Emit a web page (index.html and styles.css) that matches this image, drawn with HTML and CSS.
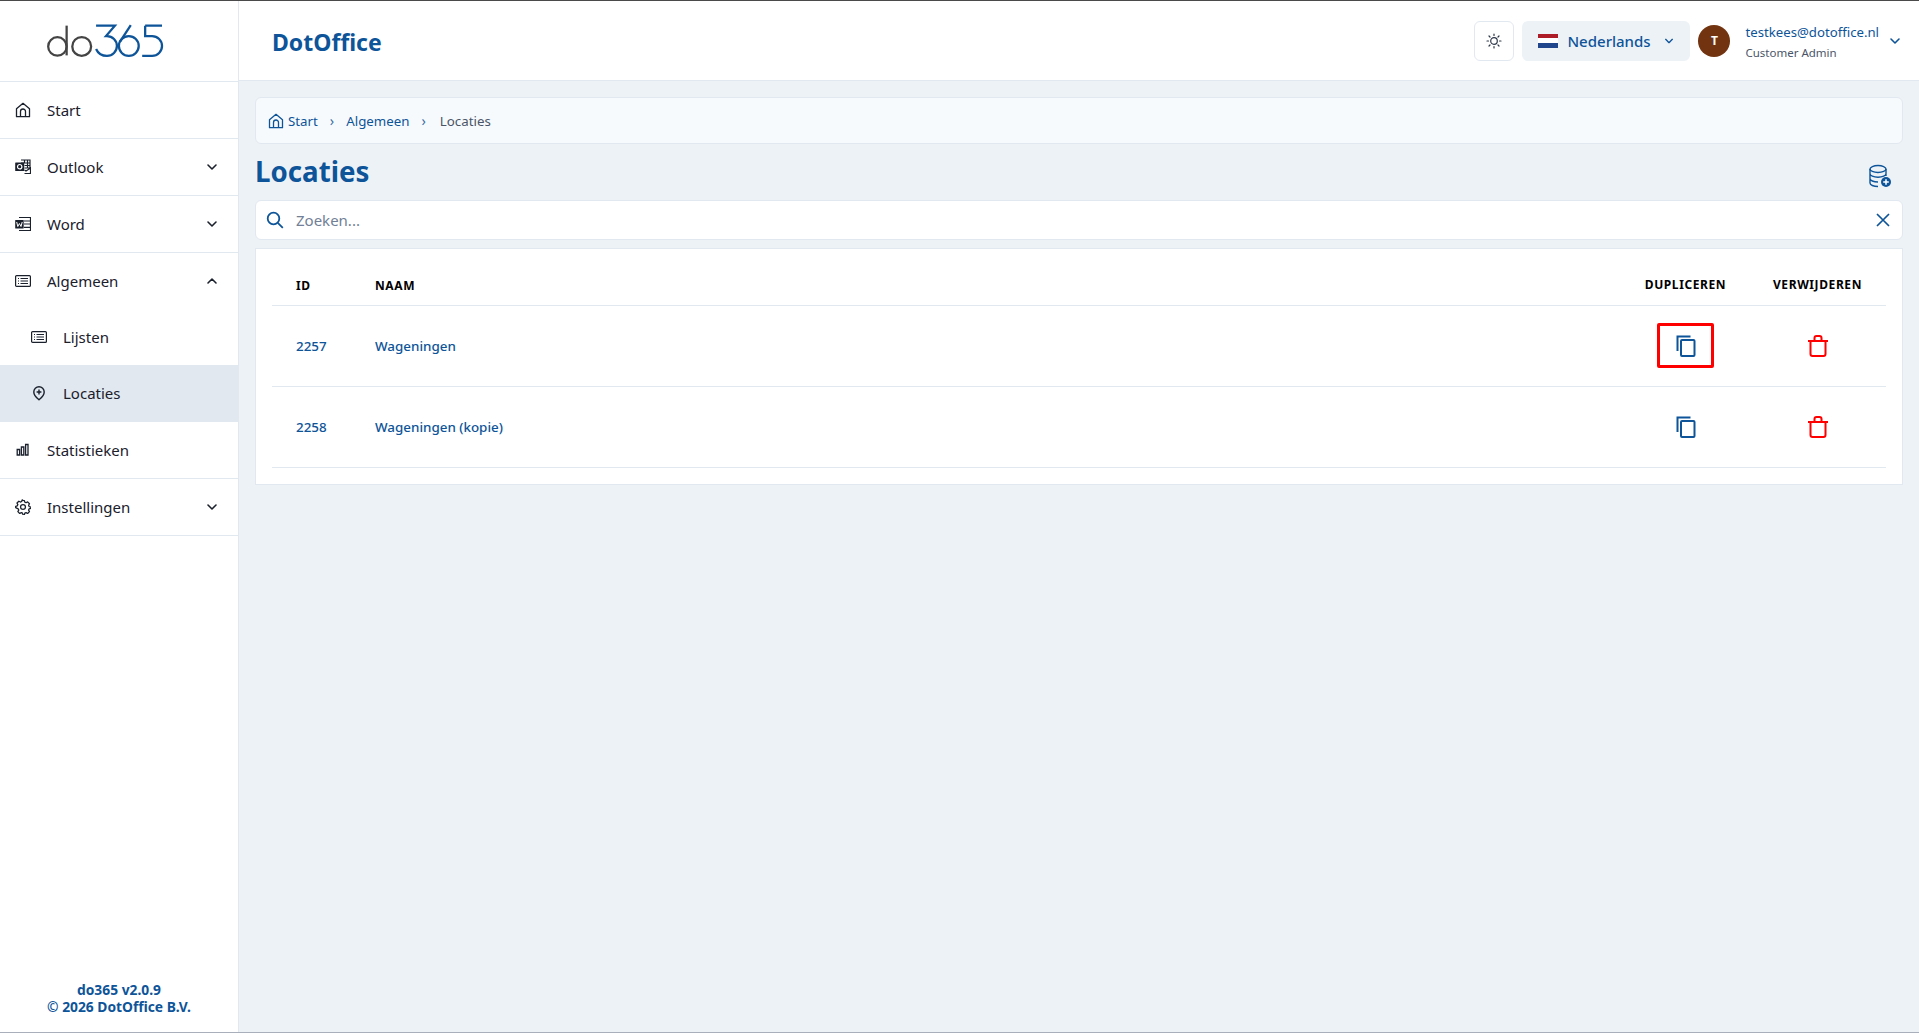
FILE: index.html
```html
<!DOCTYPE html>
<html lang="nl">
<head>
<meta charset="utf-8">
<title>Locaties</title>
<link rel="stylesheet" href="styles.css">
</head>
<body>
<svg class="sprite" width="0" height="0">
  <defs>
    <symbol id="i-home" viewBox="0 0 16 16"><path d="M1.500 6.800 8 1.300l6.500 5.500V14.700h-13zM5.500 14.700V9.500a2.500 2.500 0 0 1 5 0v5.200" fill="none" stroke="currentColor" stroke-width="1.300" stroke-linejoin="round"/></symbol>
    <symbol id="i-list" viewBox="0 0 16 16"><rect x=".6" y="2.600" width="14.800" height="10.800" rx="1" fill="none" stroke="currentColor" stroke-width="1.200"/><path d="M3 5.500h1M5.500 5.500H13M3 8h1M5.500 8H13M3 10.500h1M5.500 10.500H13" stroke="currentColor" stroke-width="1.100"/></symbol>
    <symbol id="i-chev" viewBox="0 0 12 12"><path d="m2 4 4 4 4-4" fill="none" stroke="currentColor" stroke-width="1.600" stroke-linecap="round" stroke-linejoin="round"/></symbol>
    <symbol id="i-copy" viewBox="0 0 24 24"><path d="M3.500 17V2.500h13" fill="none" stroke="currentColor" stroke-width="2"/><rect x="7" y="6" width="13.500" height="16" rx="1" fill="none" stroke="currentColor" stroke-width="2"/></symbol>
    <symbol id="i-trash" viewBox="0 0 24 24"><path d="M2 7h20M8.500 7V4a2 2 0 0 1 2-2h3a2 2 0 0 1 2 2v3M4.500 7v13a2 2 0 0 0 2 2h11a2 2 0 0 0 2-2V7" fill="none" stroke="currentColor" stroke-width="2"/></symbol>
  </defs>
</svg>
<div class="app">
  <aside class="sidebar">
    <div class="logo">
      <svg width="117" height="34" viewBox="0 0 118 34" fill="none" stroke-width="2.300" aria-label="do365">
        <g stroke="#444444">
          <circle cx="10.500" cy="22.500" r="9.300"/>
          <path d="M19.800 1.500v30"/>
          <circle cx="35" cy="22.500" r="9.500"/>
        </g>
        <g stroke="#0d5499">
          <path d="M49.500 1.500h19l-9 10.500h1a10 10 0 0 1 0 20c-5 0-9-2.500-11-7"/>
          <circle cx="82.500" cy="22" r="10"/>
          <path d="M73.500 18 84.500 1"/>
          <path d="M99 1.500h17M99 1.500v10.500h7a10 10 0 0 1 0 20h-10"/>
        </g>
      </svg>
    </div>
    <nav class="nav">
      <a class="nav-item"><svg class="nav-icon"><use href="#i-home"/></svg><span>Start</span></a>
      <a class="nav-item"><svg class="nav-icon" viewBox="0 0 16 16"><rect x=".2" y="3.500" width="9" height="8.500" rx=".5" fill="currentColor"/><circle cx="4.700" cy="7.700" r="2.200" fill="none" stroke="#fff" stroke-width="1.200"/><path d="M6 1h9v8M9.500 1v2.500M12.500 1v8M6 4h9M9.500 6.500H15M9.500 9H15M9.500 14.500H15.500V9L11 12 9.500 11" fill="none" stroke="currentColor" stroke-width="1.200"/></svg><span>Outlook</span><svg class="chev"><use href="#i-chev"/></svg></a>
      <a class="nav-item"><svg class="nav-icon" viewBox="0 0 16 16"><rect x=".2" y="4" width="8.500" height="8.500" rx=".5" fill="currentColor"/><path d="m1.700 6 1.100 4.500L4.400 7.500l1.600 3L7.200 6" fill="none" stroke="#fff" stroke-width="1"/><path d="M4 1.500h11.500v13H4M9 5h6.500M9 8h6.500M9 11.300h6.500" fill="none" stroke="currentColor" stroke-width="1.200"/></svg><span>Word</span><svg class="chev"><use href="#i-chev"/></svg></a>
      <div class="nav-group">
        <a class="nav-item nav-item-plain"><svg class="nav-icon"><use href="#i-list"/></svg><span>Algemeen</span><svg class="chev chev-up"><use href="#i-chev"/></svg></a>
        <a class="nav-item nav-sub"><svg class="nav-icon"><use href="#i-list"/></svg><span>Lijsten</span></a>
        <a class="nav-item nav-sub nav-active"><svg class="nav-icon" viewBox="0 0 16 16"><path d="M8 14.800c-3-2.300-5.200-4.800-5.200-7.800a5.200 5.200 0 0 1 10.400 0c0 3-2.200 5.500-5.200 7.800z" fill="none" stroke="currentColor" stroke-width="1.400"/><path d="M8 4.600v4.800M5.600 7h4.800" stroke="currentColor" stroke-width="1.400"/></svg><span>Locaties</span></a>
      </div>
      <a class="nav-item"><svg class="nav-icon" viewBox="0 0 16 16"><path d="M2.200 7.500h2.400V13H2.200zM6.400 5h2.400v8H6.400zM10.600 2.500H13V13h-2.400z" fill="none" stroke="currentColor" stroke-width="1.300"/></svg><span>Statistieken</span></a>
      <a class="nav-item"><svg class="nav-icon" viewBox="0 0 24 24"><path d="M12 2l2 .3.700 2.500 1.900.8 2.300-1.300 2.800 2.800-1.300 2.300.8 1.900 2.500.7v2l-2.500.7-.8 1.900 1.300 2.300-2.800 2.800-2.300-1.300-1.900.8-.7 2.500h-2l-.7-2.500-1.900-.8-2.300 1.300-2.800-2.800 1.300-2.300-.8-1.900L1 13v-2l2.500-.7.8-1.900L3 6.100l2.800-2.800 2.300 1.300 1.900-.8.700-2.500z" fill="none" stroke="currentColor" stroke-width="1.900" stroke-linejoin="round"/><circle cx="12" cy="12" r="3.700" fill="none" stroke="currentColor" stroke-width="1.900"/></svg><span>Instellingen</span><svg class="chev"><use href="#i-chev"/></svg></a>
    </nav>
    <div class="version">do365 v2.0.9<br>© 2026 DotOffice B.V.</div>
  </aside>
  <div class="content">
    <header class="topbar">
      <div class="brand">DotOffice</div>
      <button class="theme-btn" type="button" aria-label="Thema">
        <svg width="16" height="16" viewBox="0 0 16 16" fill="none" stroke="#2d3748" stroke-width="1.200" stroke-linecap="round"><circle cx="8" cy="8" r="3.300"/><path d="M8 1v1.500M8 13.500V15M1 8h1.500M13.500 8H15M3 3l1 1M12 12l1 1M3 13l1-1M12 4l1-1"/></svg>
      </button>
      <button class="lang-btn" type="button">
        <span class="flag"><i class="flag-red"></i><i class="flag-white"></i><i class="flag-blue"></i></span>
        <span class="lang-name">Nederlands</span>
        <svg class="lang-chev"><use href="#i-chev"/></svg>
      </button>
      <div class="avatar">T</div>
      <div class="user">
        <div class="user-mail">testkees@dotoffice.nl</div>
        <div class="user-role">Customer Admin</div>
      </div>
      <svg class="user-chev"><use href="#i-chev"/></svg>
    </header>
    <main class="main">
      <div class="breadcrumb">
        <svg class="crumb-home"><use href="#i-home"/></svg>
        <a class="crumb-start">Start</a>
        <span class="crumb-sep">›</span>
        <a>Algemeen</a>
        <span class="crumb-sep">›</span>
        <span class="crumb-current">Locaties</span>
      </div>
      <div class="title-row">
        <h1>Locaties</h1>
        <svg class="db-add" width="24" height="24" viewBox="0 0 24 24" fill="none" stroke="#0d5499" stroke-width="1.400"><ellipse cx="10" cy="5" rx="8" ry="3.500"/><path d="M2 5v14c0 2 3.500 3.500 8 3.500M18 5v7M2 9.700c0 2 3.500 3.500 8 3.500s8-1.500 8-3.500M2 14.500c0 2 3.500 3.500 8 3.500"/><circle cx="18" cy="18" r="5" fill="#0d5499" stroke="none"/><path d="M18 15.200v5.600M15.200 18h5.600" stroke="#fff" stroke-width="1.500"/></svg>
      </div>
      <div class="search">
        <svg width="18" height="18" viewBox="0 0 18 18" fill="none" stroke="#0d5499" stroke-width="1.800"><circle cx="7.500" cy="7.500" r="5.800"/><path d="m11.800 11.800 5 5"/></svg>
        <span class="search-text">Zoeken...</span>
        <svg width="14" height="14" viewBox="0 0 14 14" fill="none" stroke="#0d5499" stroke-width="1.700"><path d="m1 1 12 12M13 1 1 13"/></svg>
      </div>
      <section class="card">
        <table class="table">
          <colgroup><col class="col-id"><col><col class="col-dup"><col class="col-del"></colgroup>
          <thead>
            <tr><th>ID</th><th>Naam</th><th class="center">Dupliceren</th><th class="center">Verwijderen</th></tr>
          </thead>
          <tbody>
            <tr>
              <td>2257</td><td>Wageningen</td>
              <td class="center"><span class="dup-box"><svg class="icon-copy"><use href="#i-copy"/></svg></span></td>
              <td class="center"><svg class="icon-trash"><use href="#i-trash"/></svg></td>
            </tr>
            <tr>
              <td>2258</td><td>Wageningen (kopie)</td>
              <td class="center"><span class="dup-plain"><svg class="icon-copy"><use href="#i-copy"/></svg></span></td>
              <td class="center"><svg class="icon-trash"><use href="#i-trash"/></svg></td>
            </tr>
          </tbody>
        </table>
      </section>
    </main>
  </div>
</div>
</body>
</html>
```
FILE: styles.css
```css
* { box-sizing: border-box; }
html, body { margin: 0; height: 100%; }
body {
  font-family: "Noto Sans", "Open Sans", sans-serif;
  color: #1a202c;
  background: #edf2f7;
  overflow: hidden;
}
.sprite { position: absolute; }
.app {
  display: flex;
  height: 1033px;
  border-top: 1px solid #4a4a4a;
  border-bottom: 1px solid #a9afbb;
}
.sidebar {
  width: 239px;
  flex: none;
  display: flex;
  flex-direction: column;
  background: #fff;
  border-right: 1px solid #e2e8f0;
}
.logo {
  height: 81px;
  display: flex;
  align-items: flex-start;
  padding: 23px 0 0 47px;
  border-bottom: 1px solid #e2e8f0;
}
.nav { display: flex; flex-direction: column; }
.nav-item {
  height: 57px;
  display: flex;
  align-items: center;
  padding: 0 20px 0 15px;
  font-size: 15px;
  border-bottom: 1px solid #e2e8f0;
}
.nav-item-plain, .nav-sub { height: 56px; border-bottom: 0; }
.nav-sub { padding-left: 31px; }
.nav-active { background: #e2e8f0; height: 57px; padding-bottom: 1px; }
.nav-icon { width: 16px; height: 16px; margin-right: 16px; flex: none; }
.chev { width: 12px; height: 12px; margin-left: auto; }
.chev-up { transform: rotate(180deg); }
.version {
  margin-top: auto;
  padding-bottom: 17px;
  text-align: center;
  color: #0d5499;
  font-size: 13.800px;
  font-weight: 700;
  line-height: 17px;
}
.content { flex: 1; min-width: 0; display: flex; flex-direction: column; }
.topbar {
  height: 80px;
  flex: none;
  display: flex;
  align-items: center;
  padding: 0 18px 0 33px;
  background: #fff;
  border-bottom: 1px solid #e2e8f0;
}
.brand { font-size: 23px; font-weight: 700; color: #0d5499; margin-right: auto; padding-top: 2px; }
.theme-btn {
  width: 40px;
  height: 40px;
  padding: 0;
  display: flex;
  align-items: center;
  justify-content: center;
  background: #fff;
  border: 1px solid #e2e8f0;
  border-radius: 6px;
}
.lang-btn {
  width: 168px;
  height: 40px;
  margin-left: 8px;
  padding: 0 16px;
  display: flex;
  align-items: center;
  background: #edf2f7;
  border: 0;
  border-radius: 6px;
  color: #0d5499;
  font-family: inherit;
  font-size: 15px;
  font-weight: 500;
}
.flag { width: 20px; height: 14px; display: flex; flex-direction: column; margin-right: 9px; }
.flag i { flex: 1; display: block; }
.flag-red { background: #ae1c28; }
.flag-white { background: #fff; }
.flag-blue { background: #21468b; }
.lang-chev { width: 10px; height: 10px; margin-left: auto; }
.avatar {
  width: 32px;
  height: 32px;
  margin-left: 8px;
  border-radius: 50%;
  background: #723410;
  color: #fff;
  font-size: 12px;
  font-weight: 700;
  display: flex;
  align-items: center;
  justify-content: center;
}
.user { margin-left: 15px; padding-top: 3px; }
.user-mail { font-size: 13.200px; color: #0d5499; line-height: 20px; }
.user-role { font-size: 11.500px; color: #4a5568; line-height: 20px; margin-top: 1px; }
.user-chev { width: 12px; height: 12px; margin-left: 10px; color: #0d5499; }
.main { flex: 1; padding: 16px; }
.breadcrumb {
  height: 47px;
  display: flex;
  align-items: center;
  padding: 0 12px;
  background: #f7fafc;
  border: 1px solid #e2e8f0;
  border-radius: 6px;
  color: #0d5499;
  font-size: 13.300px;
}
.crumb-home { width: 16px; height: 16px; margin-right: 4px; flex: none; }
.crumb-sep { margin: 0 12px; font-size: 14px; color: #3d6ea5; }
.crumb-current { color: #4a5568; margin-left: 2px; }
.title-row {
  height: 56px;
  display: flex;
  align-items: center;
  justify-content: space-between;
  padding-right: 11px;
}
h1 {
  margin: 0 0 2px;
  font-size: 27.700px;
  font-weight: 700;
  color: #0d5499;
  line-height: 54px;
}
.db-add { margin-top: 7px; }
.search {
  height: 40px;
  display: flex;
  align-items: center;
  padding: 0 12px 0 10px;
  background: #fff;
  border: 1px solid #e2e8f0;
  border-radius: 6px;
}
.search-text { flex: 1; margin-left: 12px; color: #718096; font-size: 15px; }
.card {
  margin-top: 8px;
  padding: 16px;
  background: #fff;
  border: 1px solid #e2e8f0;
}
.table { width: 100%; border-collapse: collapse; table-layout: fixed; }
.col-id { width: 79px; }
.col-dup { width: 127px; }
.col-del { width: 137px; }
th {
  height: 40px;
  padding: 2px 0 0 24px;
  text-align: left;
  font-size: 12px;
  font-weight: 700;
  letter-spacing: .05em;
  text-transform: uppercase;
  color: #000;
  border-bottom: 1px solid #e2e8f0;
}
th.center, td.center { padding: 0; text-align: center; }
td {
  height: 81px;
  padding: 0 0 0 24px;
  font-size: 13.400px;
  font-weight: 500;
  color: #0d5499;
  border-bottom: 1px solid #e2e8f0;
}
.dup-box, .dup-plain {
  width: 57px;
  height: 45px;
  display: inline-flex;
  align-items: center;
  justify-content: center;
  vertical-align: middle;
}
.dup-box { border: 3px solid #f00; border-radius: 2px; }
.icon-copy { width: 24px; height: 24px; color: #0d5499; }
.icon-trash { width: 24px; height: 24px; color: #f00; vertical-align: middle; }
```
